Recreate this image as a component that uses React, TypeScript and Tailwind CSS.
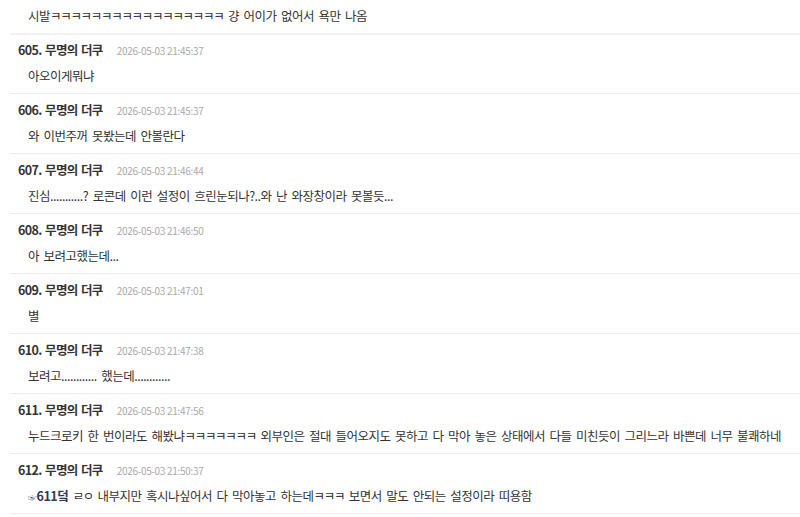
import React from "react";

function K({ text }: { text: string }) {
  const parts = text.split(/([ㄱ-ㅎㅏ-ㅣ]+)/);
  return (
    <>
      {parts.map((p, i) =>
        /^[ㄱ-ㅎㅏ-ㅣ]+$/.test(p) ? (
          <span key={i} className="tracking-[-1.3px]">
            {p}
          </span>
        ) : (
          <React.Fragment key={i}>{p}</React.Fragment>
        )
      )}
    </>
  );
}

type Item = { no: number; date: string; body: React.ReactNode };

const items: Item[] = [
  { no: 605, date: "2026-05-03 21:45:37", body: <K text="아오이게뭐냐" /> },
  { no: 606, date: "2026-05-03 21:45:37", body: <K text="와 이번주꺼 못봤는데 안볼란다" /> },
  {
    no: 607,
    date: "2026-05-03 21:46:44",
    body: <K text="진심...........? 로콘데 이런 설정이 흐린눈되나?..와 난 와장창이라 못볼듯..." />,
  },
  { no: 608, date: "2026-05-03 21:46:50", body: <K text="아 보려고했는데..." /> },
  { no: 609, date: "2026-05-03 21:47:01", body: <K text="별" /> },
  { no: 610, date: "2026-05-03 21:47:38", body: <K text="보려고............ 했는데............" /> },
  {
    no: 611,
    date: "2026-05-03 21:47:56",
    body: (
      <K text="누드크로키 한 번이라도 해봤냐ㅋㅋㅋㅋㅋㅋㅋ 외부인은 절대 들어오지도 못하고 다 막아 놓은 상태에서 다들 미친듯이 그리느라 바쁜데 너무 불쾌하네" />
    ),
  },
  {
    no: 612,
    date: "2026-05-03 21:50:37",
    body: (
      <>
        <span className="text-[9px] text-[#2d3a5a]">☞</span>
        <span className="font-bold text-[#2d3a5a]">611덬</span>{" "}
        <K text="ㄹㅇ 내부지만 혹시나싶어서 다 막아놓고 하는데ㅋㅋㅋ 보면서 말도 안되는 설정이라 띠용함" />
      </>
    ),
  },
];

const font = { fontFamily: '"Noto Sans CJK KR", "Noto Sans", sans-serif' };

const bodyCls =
  "h-[20px] flex items-center text-[12.5px] tracking-[-0.5px] [word-spacing:2.2px] text-[#333] whitespace-nowrap";

export default function App() {
  return (
    <div className="w-[800px] h-[517px] overflow-hidden bg-white" style={font}>
      <div className="pt-[6px] pb-[7px]">
        <div className={bodyCls + " pl-[28px]"}>
          <span>
            <K text="시발ㅋㅋㅋㅋㅋㅋㅋㅋㅋㅋㅋㅋㅋㅋㅋㅋㅋ 걍 어이가 없어서 욕만 나옴" />
          </span>
        </div>
      </div>
      {items.map((it, i) => (
        <div
          key={it.no}
          className={
            i === 0
              ? "ml-[10px] border-t-2 border-[#f2f2f2] pb-[7px]"
              : "ml-[10px] border-t border-[#ececec] pb-[7px]"
          }
        >
          <div
            className={
              i === 0 ? "h-[31px] flex items-center pl-[8px]" : "h-[32px] flex items-center pl-[8px]"
            }
          >
            <span className="text-[12.5px] font-bold text-[#333] tracking-[-0.6px] [word-spacing:1px]">
              {it.no}. 무명의 더쿠
            </span>
            <span className="ml-[14px] text-[10px] text-[#aaa] tracking-[-0.3px]">{it.date}</span>
          </div>
          <div className={bodyCls + " pl-[18px]"}>
            <span>{it.body}</span>
          </div>
        </div>
      ))}
      <div className="ml-[10px] border-t border-[#ececec]" />
    </div>
  );
}
